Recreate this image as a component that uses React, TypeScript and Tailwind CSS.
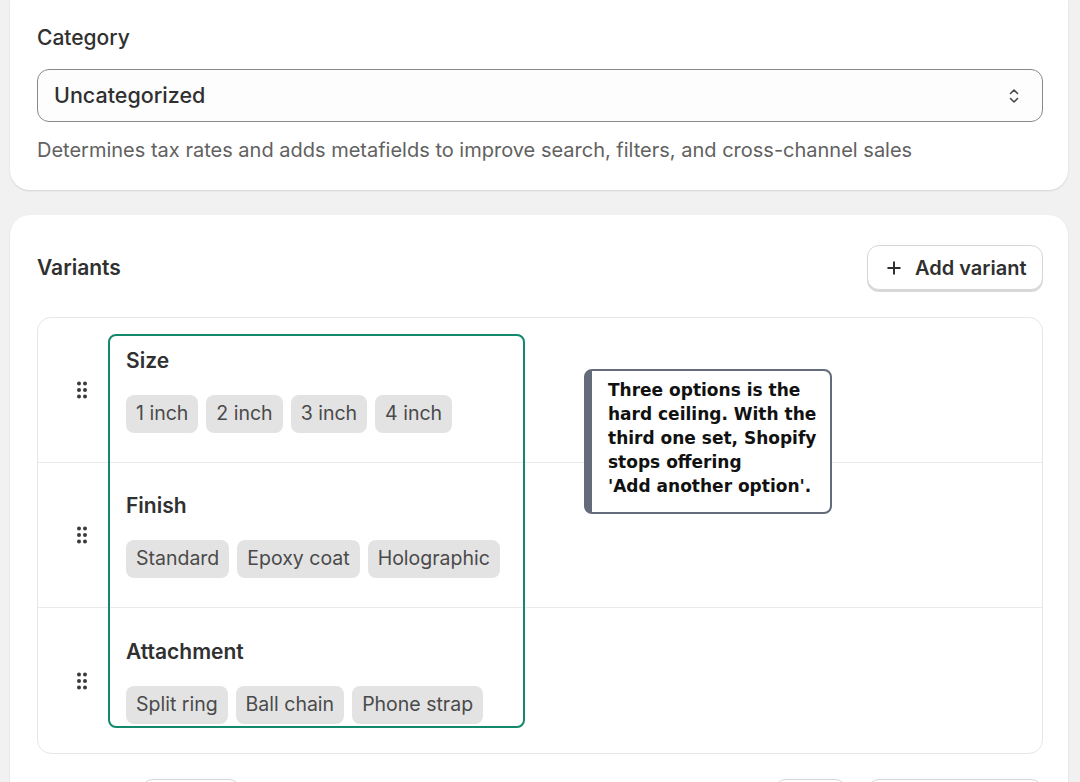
import { Plus } from "lucide-react"

interface ProductOption {
  name: string
  values: string[]
}

const options: ProductOption[] = [
  { name: "Size", values: ["1 inch", "2 inch", "3 inch", "4 inch"] },
  { name: "Finish", values: ["Standard", "Epoxy coat", "Holographic"] },
  { name: "Attachment", values: ["Split ring", "Ball chain", "Phone strap"] },
]

function DragHandle() {
  return (
    <svg width="10" height="18" viewBox="0 0 10 18" className="shrink-0 text-[#3a3a3a]">
      {[0, 1, 2].map(r =>
        [0, 1].map(c => (
          <circle key={`${r}-${c}`} cx={2 + c * 6} cy={2.5 + r * 6.5} r="2" fill="currentColor" />
        ))
      )}
    </svg>
  )
}

function SelectChevron() {
  return (
    <svg width="12" height="20" viewBox="0 0 12 20" fill="none" stroke="#4a4a4a" strokeWidth="1.6" strokeLinecap="round" strokeLinejoin="round">
      <path d="M2.5 7.5 6 4l3.5 3.5" />
      <path d="M2.5 12.5 6 16l3.5-3.5" />
    </svg>
  )
}

export default function App() {
  return (
    <div className="min-h-screen bg-[#f1f1f1] pl-[10px] pr-[12px] font-['Inter',sans-serif] text-[#303030]">
      {/* Category card */}
      <div className="bg-white rounded-b-[20px] shadow-[0_1px_2px_rgba(0,0,0,0.12)] pl-[27px] pr-[25px] pt-[24px] pb-[27px]">
        <p className="text-[21px] leading-[28px] font-medium mb-[17px]">Category</p>
        <div className="h-[53px] rounded-[12px] border border-[#8a8a8a] bg-[#fdfdfd] pl-[16px] pr-[22px] flex items-center justify-between">
          <span className="text-[21.5px] font-medium">Uncategorized</span>
          <SelectChevron />
        </div>
        <p className="mt-[15px] text-[20px] leading-[26px] text-[#616161]">
          Determines tax rates and adds metafields to improve search, filters, and cross-channel sales
        </p>
      </div>

      {/* Variants card */}
      <div className="mt-[25px] bg-white rounded-[20px] shadow-[0_1px_2px_rgba(0,0,0,0.12)] pl-[27px] pr-[25px] pt-[30px] pb-[30px]">
        <div className="flex items-center justify-between">
          <h2 className="text-[21px] leading-[28px] font-semibold">Variants</h2>
          <button className="h-[45px] w-[176px] rounded-[12px] border border-[#d6d6d6] bg-white shadow-[0_2px_0_#d9d9d9] flex items-center pl-[16px] gap-[11px] text-[20px] font-semibold">
            <Plus size={20} strokeWidth={2.4} />
            Add variant
          </button>
        </div>

        <div className="relative mt-[27px] rounded-[14px] border border-[#e6e6e6]">
          {options.map((opt, i) => (
            <div
              key={opt.name}
              className={`h-[145px] flex items-center pl-[39px] gap-[39px] ${i < options.length - 1 ? "border-b border-[#ebebeb]" : ""}`}
            >
              <DragHandle />
              <div className="flex flex-col gap-[20px]">
                <p className="text-[21px] leading-[28px] font-semibold">{opt.name}</p>
                <div className="flex gap-[8px]">
                  {opt.values.map(v => (
                    <span key={v} className="h-[38px] px-[10px] rounded-[8px] bg-[#e3e3e3] flex items-center text-[19.5px] text-[#4a4a4a]">
                      {v}
                    </span>
                  ))}
                </div>
              </div>
            </div>
          ))}

          {/* highlight around the option values */}
          <div className="absolute left-[70px] top-[16px] w-[417px] h-[394px] rounded-[8px] border-2 border-[#12896a] pointer-events-none" />

          {/* note */}
          <div className="absolute left-[546px] top-[51px] w-[248px] rounded-[8px] border-2 border-l-[8px] border-[#646b7a] bg-white pl-[16px] pr-[6px] pt-[7px] pb-[14px] font-['DejaVu_Sans',sans-serif] text-[17px] leading-[24px] font-bold text-[#111]">
            Three options is the hard ceiling. With the third one set, Shopify stops offering{" "}
            <span className="whitespace-nowrap">'Add another option'.</span>
          </div>
        </div>

        <div className="mt-[25px] flex items-center justify-between">
          <div className="ml-[104px] h-[45px] w-[100px] rounded-[12px] border border-[#d6d6d6]" />
          <div className="flex gap-[20px]">
            <div className="h-[45px] w-[73px] rounded-[12px] border border-[#d6d6d6]" />
            <div className="h-[45px] w-[176px] rounded-[12px] border border-[#d6d6d6]" />
          </div>
        </div>
      </div>
    </div>
  )
}
